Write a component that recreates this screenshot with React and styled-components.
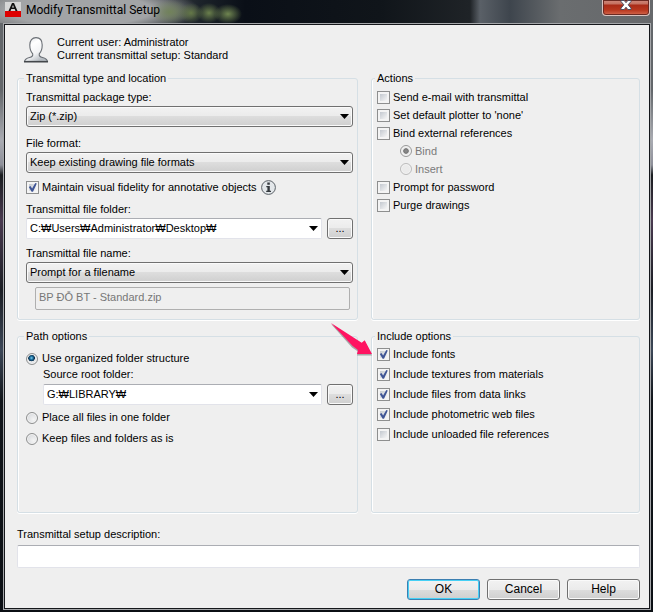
import React, { useState } from 'react';
import styled, { createGlobalStyle, css } from 'styled-components';

const Arrow = () => (
  <ArrowIcon viewBox="0 0 9 5" aria-hidden="true">
    <path d="M0 0h9L4.5 5z" fill="#000" />
  </ArrowIcon>
);

const Drop = ({ id, options, flat }) => (
  <DropBox>
    <Select id={id} $flat={flat}>
      {options.map((option) => <option key={option}>{option}</option>)}
    </Select>
    <Arrow />
  </DropBox>
);

const Check = ({ label, checked }) => {
  const [on, setOn] = useState(Boolean(checked));
  return (
    <Option>
      <Checkbox type="checkbox" checked={on} onChange={() => setOn(!on)} />
      {label}
    </Option>
  );
};

const UserIcon = () => (
  <UserSvg viewBox="0 0 26 28" aria-hidden="true">
    <defs>
      <linearGradient id="skin" x1="0" y1="0" x2="0.6" y2="1">
        <stop offset="0" stopColor="#d5d9dd" />
        <stop offset="0.35" stopColor="#fff" />
        <stop offset="0.7" stopColor="#f2f3f5" />
        <stop offset="1" stopColor="#b4bac0" />
      </linearGradient>
    </defs>
    <path
      d="M1.500 25.500c.3-2 2.200-3.300 5-4 2.700-.7 3.700-1.700 3.200-3.700C8 16 6.800 13 6.800 9 6.800 4.500 9.200 1.600 13 1.600S19.200 4.500 19.200 9c0 4-1.200 7-2.900 8.800-.5 2 .5 3 3.200 3.700 2.800.7 4.700 2 5 4z"
      fill="url(#skin)"
      stroke="#6a6f75"
      strokeWidth="1.100"
    />
    <path d="M1 25.700h24" stroke="#43474b" strokeWidth="1.600" />
  </UserSvg>
);

const InfoIcon = () => (
  <InfoSvg viewBox="0 0 15 15" role="img" aria-label="Information">
    <circle cx="7.500" cy="7.500" r="6.900" fill="#e3e7ea" stroke="#5b6167" strokeWidth="1" />
    <path d="M6.300 2.500h2.500v2.200H6.300zM5.300 6h3.500v4.800h1.200V12H5.200v-1.200h1.200V7.200H5.300z" fill="#33383d" />
  </InfoSvg>
);

const AppIcon = () => (
  <AppSvg viewBox="0 0 16 16" aria-hidden="true">
    <path d="M0 0h16v9H0z" fill="#d6d6d6" />
    <path d="M0 9h16v6H0z" fill="#de0000" />
    <path d="M3.500 9L7 1h2l3.500 8h-2L9.700 7H6.300l-.8 2zM7 5.500h2L8 3z" fill="#111" />
  </AppSvg>
);

const Pointer = () => (
  <PointerSvg viewBox="0 0 44 36" aria-hidden="true">
    <path d="M1 3l31 20 3-2.500L42 34.500H27l1-4-6-4z" fill="#777" opacity="0.6" />
    <path d="M1 2l30.700 19.700 3-2.400L42 33H27l1-4-5.300-4z" fill="#ff1361" />
  </PointerSvg>
);

export default function App() {
  const [path, setPath] = useState('organized');

  return (
    <>
      <GlobalStyle />
      <Window>
        <TitleBar>
          <AppIcon />
          <Title>Modify Transmittal Setup</Title>
          <CloseButton type="button" aria-label="Close">
            <svg width="12" height="10" viewBox="0 0 12 10">
              <path
                d="M1 .5h3.200L6 2.700 7.800.5H11v1L8.200 4.800 11 8.200v1.300H7.800L6 7.200 4.200 9.500H1V8.200l2.800-3.400L1 1.500z"
                fill="#fff"
                stroke="#4c4f63"
              />
            </svg>
          </CloseButton>
        </TitleBar>

        <Dialog>
          <Header>
            <UserIcon />
            <div>
              <Line>Current user: Administrator</Line>
              <Line>Current transmittal setup: Standard</Line>
            </div>
          </Header>

          <Groups>
            <Group>
              <Legend>Transmittal type and location</Legend>
              <Field $gap={6}>
                <Label htmlFor="package">Transmittal package type:</Label>
                <Drop id="package" options={['Zip (*.zip)']} />
              </Field>
              <Field $gap={10}>
                <Label htmlFor="format">File format:</Label>
                <Drop id="format" options={['Keep existing drawing file formats']} />
              </Field>
              <InfoRow>
                <Check label="Maintain visual fidelity for annotative objects" checked />
                <InfoIcon />
              </InfoRow>
              <Field $gap={8}>
                <Label htmlFor="folder">Transmittal file folder:</Label>
                <BrowseRow>
                  <Drop id="folder" flat options={['C:₩Users₩Administrator₩Desktop₩']} />
                  <BrowseButton type="button">...</BrowseButton>
                </BrowseRow>
              </Field>
              <Field $gap={8}>
                <Label htmlFor="filename">Transmittal file name:</Label>
                <Drop id="filename" options={['Prompt for a filename']} />
              </Field>
              <FileName aria-label="File name" disabled defaultValue="BP ĐỖ BT - Standard.zip" />
            </Group>

            <Group $side>
              <Legend>Actions</Legend>
              <OptionList $row={18} $top={3}>
                <Check label="Send e-mail with transmittal" />
                <Check label="Set default plotter to 'none'" />
                <Check label="Bind external references" />
                <Option $nested $disabled>
                  <Radio type="radio" name="bind" disabled defaultChecked />
                  Bind
                </Option>
                <Option $nested $disabled>
                  <Radio type="radio" name="bind" disabled />
                  Insert
                </Option>
                <Check label="Prompt for password" />
                <Check label="Purge drawings" />
              </OptionList>
            </Group>

            <Group>
              <Legend>Path options</Legend>
              <OptionList $row={21} $top={5}>
                <Option $wide>
                  <Radio
                    type="radio"
                    name="path"
                    checked={path === 'organized'}
                    onChange={() => setPath('organized')}
                  />
                  Use organized folder structure
                </Option>
                <RootField>
                  <Label htmlFor="root">Source root folder:</Label>
                  <BrowseRow>
                    <Drop id="root" flat options={['G:₩LIBRARY₩']} />
                    <BrowseButton type="button">...</BrowseButton>
                  </BrowseRow>
                </RootField>
                <Option $wide>
                  <Radio type="radio" name="path" checked={path === 'one'} onChange={() => setPath('one')} />
                  Place all files in one folder
                </Option>
                <Option $wide>
                  <Radio type="radio" name="path" checked={path === 'keep'} onChange={() => setPath('keep')} />
                  Keep files and folders as is
                </Option>
              </OptionList>
            </Group>

            <Group $side>
              <Legend>Include options</Legend>
              <Pointer />
              <OptionList $row={20} $top={1}>
                <Check label="Include fonts" checked />
                <Check label="Include textures from materials" checked />
                <Check label="Include files from data links" checked />
                <Check label="Include photometric web files" checked />
                <Check label="Include unloaded file references" />
              </OptionList>
            </Group>
          </Groups>

          <Description>
            <Label htmlFor="description">Transmittal setup description:</Label>
            <TextBox id="description" type="text" />
          </Description>

          <Footer>
            <Button type="button" $primary>OK</Button>
            <Button type="button">Cancel</Button>
            <Button type="button">Help</Button>
          </Footer>
        </Dialog>
      </Window>
    </>
  );
}

const GlobalStyle = createGlobalStyle`
  * {
    box-sizing: border-box;
  }

  body {
    margin: 0;
    background: #14181d;
  }

  body, button, input, select {
    font-family: 'Liberation Sans', 'Noto Sans CJK KR', sans-serif;
    font-size: 11px;
    line-height: 13px;
    color: #000;
  }
`;

const Window = styled.div`
  display: flex;
  flex-direction: column;
  min-height: 100vh;
  padding: 0 2px 2px 3px;
  background: linear-gradient(#63676b 0, #63676b 90px, #a9abb2 140px, #8d8f99 165px, #1a1d20 175px, #4a3b50 220px, #1b1e24 290px, #3c4757 350px, #12161b 400px, #0b0f14 100%);
`;

const TitleBar = styled.header`
  display: flex;
  align-items: flex-start;
  height: 23px;
  margin: 0 -2px 0 -3px;
  padding: 0 3px 0 5px;
  background:
    radial-gradient(ellipse 14px 10px at 228px 14px, #6f8550, transparent),
    radial-gradient(ellipse 12px 10px at 209px 13px, #6a7f4c, transparent),
    radial-gradient(ellipse 12px 10px at 191px 13px, #647847, transparent),
    radial-gradient(ellipse 20px 12px at 170px 12px, #71825a, transparent),
    radial-gradient(ellipse 120px 26px at 80px 10px, #a2a4a6 60%, transparent),
    linear-gradient(90deg, #6b6d70 0, #4b4e51 140px, #1c232a 200px, #0a0f17 245px, #10151a 380px, #1f2327 470px, #5a6067 480px, #3e454d 510px, #6a6d6f 560px, #66686b 100%);
`;

const Title = styled.h1`
  flex: 1;
  margin: 2px 0 0 5px;
  font-family: Roboto, sans-serif;
  font-size: 12px;
  font-weight: 400;
  line-height: 16px;
`;

const CloseButton = styled.button`
  display: flex;
  justify-content: center;
  width: 48px;
  height: 16px;
  padding: 0;
  border: 1px solid #d9c3c0;
  border-top: 0;
  border-radius: 0 0 4px 4px;
  background: linear-gradient(#d18a7c 0, #c4705f 4px, #a92b17 5px, #b8371e 10px, #d4694f 100%);
  box-shadow: inset 0 0 0 1px #6b2a22;
`;

const Dialog = styled.main`
  flex: 1;
  display: flex;
  flex-direction: column;
  padding: 11px 9px 8px 12px;
  border: 1px solid #15171b;
  outline: 1px solid #a5a7aa;
  margin: 1px;
  background: #efefef;
`;

const Header = styled.div`
  display: flex;
  gap: 8px;
  padding-left: 6px;
  margin-bottom: 8px;
`;

const Line = styled.p`
  margin: 0;
  line-height: 13px;
`;

const Groups = styled.div`
  flex: 1;
  display: grid;
  grid-template-columns: minmax(0, 341fr) minmax(0, 269fr);
  grid-template-rows: auto 1fr;
  gap: 10px 13px;
`;

const Group = styled.fieldset`
  position: relative;
  min-width: 0;
  margin: 0;
  padding: 0 4px 9px ${({ $side }) => ($side ? '5px' : '8px')};
  border: 1px solid #d5dfe5;
  border-radius: 3px;
  box-shadow: inset 1px 0 #fff, 0 1px #fff;
`;

const Legend = styled.legend`
  padding: 0 2px;
  margin-left: -2px;
  line-height: 13px;
`;

const Field = styled.div`
  margin-top: ${({ $gap }) => $gap}px;
`;

const Label = styled.label`
  display: block;
  margin-bottom: 2px;
  line-height: 13px;
`;

const DropBox = styled.div`
  flex: 1;
  display: grid;
  align-items: center;

  > * {
    grid-area: 1 / 1;
  }
`;

const raised = css`
  border: 1px solid #707070;
  border-radius: 3px;
  background: linear-gradient(#f2f2f2 0, #ebebeb 50%, #dddddd 50%, #cfcfcf 100%);
  box-shadow: inset 0 0 0 1px #fafafa;
`;

const sunken = css`
  border: 1px solid #e2e3ea;
  border-top-color: #abadb3;
  border-radius: 2px;
  background: #fff;
`;

const Select = styled.select`
  width: 100%;
  height: 21px;
  padding: 0 20px 0 3px;
  line-height: 17px;
  appearance: none;
  ${({ $flat }) => ($flat ? sunken : raised)}
`;

const ArrowIcon = styled.svg`
  justify-self: end;
  width: 9px;
  height: 5px;
  margin-right: 4px;
  pointer-events: none;
`;

const InfoRow = styled.div`
  display: flex;
  align-items: center;
  gap: 4px;
  height: 15px;
  margin-top: 7px;
`;

const BrowseRow = styled.div`
  display: flex;
  gap: 5px;
`;

const BrowseButton = styled.button`
  width: 26px;
  height: 21px;
  padding: 0;
  ${raised}
`;

const FileName = styled.input`
  display: block;
  width: calc(100% - 12px);
  height: 23px;
  margin: 4px 0 0 9px;
  padding: 0 3px 3px;
  line-height: 18px;
  border: 1px solid #afafaf;
  border-radius: 2px;
  background: #efefef;
  color: #777;
`;

const Option = styled.label`
  display: flex;
  align-items: center;
  gap: ${({ $wide }) => ($wide ? 4 : 3)}px;
  padding-left: ${({ $nested }) => ($nested ? 23 : 0)}px;
  color: ${({ $disabled }) => ($disabled ? '#7a7a7a' : '#000')};
`;

const OptionList = styled.div`
  padding-top: ${({ $top }) => $top}px;

  > ${Option} {
    height: ${({ $row }) => $row}px;
  }
`;

const Checkbox = styled.input`
  flex: none;
  width: 13px;
  height: 13px;
  margin: 0;
  appearance: none;
  border: 1px solid #8e8f8f;
  background: linear-gradient(135deg, #c3c8cf, #f6f6f6) content-box, #f4f4f4;
  padding: 2px;

  &:checked {
    background: url("data:image/svg+xml,%3Csvg xmlns='http://www.w3.org/2000/svg' viewBox='0 0 11 11'%3E%3Cpath d='M1.8 5l1.700-.9 1.600 2.300L8.300 1l1.500.4L6 9.700H4.600z' fill='%233f5596'/%3E%3C/svg%3E") padding-box, linear-gradient(135deg, #c3c8cf, #f6f6f6) content-box, #f4f4f4;
  }
`;

const Radio = styled.input`
  flex: none;
  width: 12px;
  height: 12px;
  margin: 0;
  appearance: none;
  border: 1px solid #8e8f8f;
  border-radius: 50%;
  background: radial-gradient(circle at 65% 65%, #f4f4f4, #cfd2d6);
  box-shadow: inset 0 0 0 1px #f4f4f4;

  &:checked {
    background: radial-gradient(circle at 45% 40%, #7fd0f0 0, #1c6f9f 20%, #0d2f4a 38%, #e4e6e8 44%);
  }

  &:disabled {
    border-color: #bcbcbc;
    background: #ebebeb;
  }

  &:disabled:checked {
    border-color: #999;
    background: radial-gradient(circle, #8f8f8f 0, #777 34%, #ececec 44%);
  }
`;

const RootField = styled.div`
  margin: 0 0 2px 17px;

  ${Label} {
    margin: -1px 0 3px;
  }
`;

const PointerSvg = styled.svg`
  position: absolute;
  top: -22px;
  left: -42px;
  width: 44px;
  height: 36px;
`;

const Description = styled.div`
  margin-top: 15px;
`;

const TextBox = styled.input`
  display: block;
  width: 100%;
  height: 23px;
  margin-top: 4px;
  padding: 0 4px;
  ${sunken}
`;

const Footer = styled.footer`
  display: flex;
  justify-content: flex-end;
  gap: 7px;
  margin-top: 11px;
`;

const Button = styled.button`
  width: 73px;
  height: 21px;
  padding: 0;
  font-size: 12px;
  ${raised}
  ${({ $primary }) => $primary && css`
    border-color: #3c7fb1;
    box-shadow: inset 0 0 0 1px #46d0f5;
  `}
`;

const UserSvg = styled.svg`
  width: 26px;
  height: 28px;
`;

const InfoSvg = styled.svg`
  width: 15px;
  height: 15px;
`;

const AppSvg = styled.svg`
  width: 16px;
  height: 16px;
  margin-top: 2px;
`;
